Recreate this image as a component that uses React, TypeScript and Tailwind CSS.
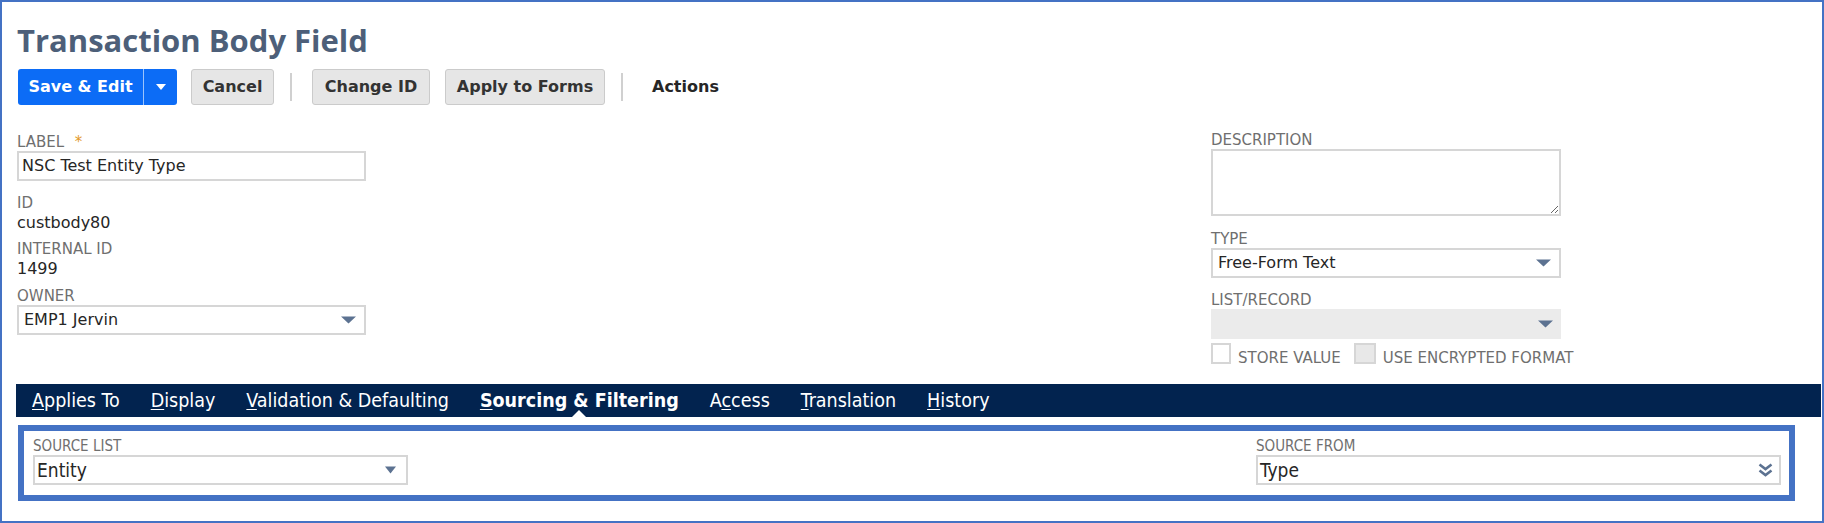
import { FC, ReactNode } from 'react';

const sans = "font-['DejaVu_Sans','Verdana',sans-serif]";
const cond = "font-['DejaVu_Sans_Condensed','DejaVu_Sans','Liberation_Sans_Narrow',sans-serif] font-stretch-condensed";

const Arrow: FC = () => (
  <svg width="15" height="8" viewBox="0 0 15 8" className="shrink-0">
    <path d="M0 0.5 L15 0.5 L7.5 7.5 Z" fill="#5c7291" />
  </svg>
);

const DoubleChevron: FC = () => (
  <svg width="15" height="14" viewBox="0 0 15 14" className="shrink-0">
    <path d="M1.5 1.5 L7.5 6 L13.5 1.5" fill="none" stroke="#5c7291" strokeWidth="2.6" />
    <path d="M1.5 7.5 L7.5 12 L13.5 7.5" fill="none" stroke="#5c7291" strokeWidth="2.6" />
  </svg>
);

const Label: FC<{ children: ReactNode; className?: string }> = ({ children, className }) => (
  <div className={`${sans} text-[15px] uppercase leading-[17px] text-[#6f6f6f] ${className ?? ''}`}>{children}</div>
);

const Value: FC<{ children: ReactNode }> = ({ children }) => (
  <div className={`${sans} mt-[1px] text-[16px] leading-[19px] text-[#262626]`}>{children}</div>
);

const Select: FC<{ value?: string; disabled?: boolean; width: string }> = ({ value, disabled, width }) => (
  <div
    className={`flex h-[30px] items-center justify-between pl-[5px] pr-[8px] ${width} ${
      disabled ? 'bg-[#ebebeb]' : 'border-2 border-[#d6d6d6] bg-white'
    }`}
  >
    <span className={`${sans} text-[16px] text-[#262626]`}>{value}</span>
    <Arrow />
  </div>
);

const tabs: { pre: string; key: string; post: string; active?: boolean }[] = [
  { pre: '', key: 'A', post: 'pplies To' },
  { pre: '', key: 'D', post: 'isplay' },
  { pre: '', key: 'V', post: 'alidation & Defaulting' },
  { pre: '', key: 'S', post: 'ourcing & Filtering', active: true },
  { pre: 'A', key: 'c', post: 'cess' },
  { pre: '', key: 'T', post: 'ranslation' },
  { pre: '', key: 'H', post: 'istory' },
];

const GrayButton: FC<{ label: string; width: string }> = ({ label, width }) => (
  <button
    className={`${sans} flex h-[36px] ${width} items-center justify-center rounded-[3px] border border-[#cbcbcb] bg-[#e6e6e6] text-[16px] font-bold text-[#333333]`}
  >
    {label}
  </button>
);

const Divider: FC = () => <div className="h-[28px] w-[2px] bg-[#d0d0d0]" />;

const App: FC = () => (
  <div className="h-[523px] w-[1824px] overflow-hidden border-2 border-[#4472c4] bg-white">
    <div className="pl-[15px] pt-[19px]">
      <h1 className="font-['Open_Sans',sans-serif] text-[31px] font-bold leading-[38px] text-[#4d5f79]">
        Transaction Body Field
      </h1>

      <div className="mt-[10px] flex h-[36px] items-center">
        <div className="ml-[1px] flex h-[36px] w-[159px] overflow-hidden rounded-[3px] bg-[#0c6cf6]">
          <span className={`${sans} flex w-[125px] items-center justify-center text-[16px] font-bold text-white`}>
            Save &amp; Edit
          </span>
          <span className="w-px bg-[#9cc3fb]" />
          <span className="flex flex-1 items-center justify-center">
            <svg width="10" height="6" viewBox="0 0 10 6">
              <path d="M0 0 L10 0 L5 6 Z" fill="#ffffff" />
            </svg>
          </span>
        </div>
        <div className="ml-[14px]">
          <GrayButton label="Cancel" width="w-[83px]" />
        </div>
        <div className="ml-[16px]">
          <Divider />
        </div>
        <div className="ml-[20px]">
          <GrayButton label="Change ID" width="w-[118px]" />
        </div>
        <div className="ml-[15px]">
          <GrayButton label="Apply to Forms" width="w-[160px]" />
        </div>
        <div className="ml-[16px]">
          <Divider />
        </div>
        <span className={`${sans} ml-[29px] text-[16px] font-bold text-[#262626]`}>Actions</span>
      </div>

      <div className="mt-[27px] flex items-start">
        <div className="w-[349px] pt-[2px]">
          <Label>
            Label <span className="ml-[6px] text-[#e39a2c]">*</span>
          </Label>
          <div className="flex h-[30px] items-center border-2 border-[#d6d6d6] pl-[3px]">
            <span className={`${sans} text-[16px] text-[#262626]`}>NSC Test Entity Type</span>
          </div>

          <Label className="mt-[14px]">ID</Label>
          <Value>custbody80</Value>

          <Label className="mt-[9px]">Internal ID</Label>
          <Value>1499</Value>

          <Label className="mt-[10px]">Owner</Label>
          <Select value="EMP1 Jervin" width="w-[349px]" />
        </div>

        <div className="ml-[845px] w-[350px]">
          <Label>Description</Label>
          <textarea
            readOnly
            className="block h-[67px] w-[350px] resize border-2 border-[#d6d6d6] bg-white outline-none"
          />

          <Label className="mt-[14px] leading-[18px]">Type</Label>
          <Select value="Free-Form Text" width="w-[350px]" />

          <Label className="mt-[13px] leading-[18px]">List/Record</Label>
          <Select disabled width="w-[350px]" />

          <div className="mt-[4px] flex h-[21px] items-end whitespace-nowrap">
            <div className="h-[21px] w-[20px] shrink-0 border-2 border-[#d6d6d6] bg-white" />
            <span className={`${sans} ml-[7px] text-[15px] leading-[11px] text-[#6f6f6f]`}>STORE VALUE</span>
            <div className="ml-[13px] h-[21px] w-[22px] shrink-0 border-2 border-[#d6d6d6] bg-[#e8e8e8]" />
            <span className={`${sans} ml-[7px] text-[15px] leading-[11px] text-[#6f6f6f]`}>
              USE ENCRYPTED FORMAT
            </span>
          </div>
        </div>
      </div>
    </div>

    <div className="ml-[14px] mr-[1px] mt-[20px] flex h-[33px] items-stretch gap-[31px] bg-[#02234f] pl-[16px]">
      {tabs.map((t) => (
        <div key={t.post} className="relative flex items-center">
          <span className={`${cond} text-[19.5px] text-white ${t.active ? 'font-bold' : ''}`}>
            {t.pre}
            <span className="underline underline-offset-2">{t.key}</span>
            {t.post}
          </span>
          {t.active && (
            <span className="absolute bottom-0 left-1/2 h-0 w-0 -translate-x-1/2 border-x-[7px] border-b-[7px] border-x-transparent border-b-white" />
          )}
        </div>
      ))}
    </div>

    <div className="ml-[16px] mr-[27px] mt-[8px] flex h-[76px] justify-between border-[6px] border-[#4472c4] pl-[9px] pr-[8px] pt-[7px]">
      <div>
        <div className={`${cond} text-[15px] uppercase leading-[17px] text-[#6f6f6f]`}>Source List</div>
        <div className="flex h-[30px] w-[375px] items-center justify-between border-2 border-[#d6d6d6] pl-[2px] pr-[10px]">
          <span className={`${cond} text-[19px] text-[#262626]`}>Entity</span>
          <svg width="11" height="8" viewBox="0 0 11 8">
            <path d="M0 0.5 L11 0.5 L5.5 7.5 Z" fill="#5c7291" />
          </svg>
        </div>
      </div>
      <div>
        <div className={`${cond} text-[15px] uppercase leading-[17px] text-[#6f6f6f]`}>Source From</div>
        <div className="flex h-[30px] w-[525px] items-center justify-between border-2 border-[#d6d6d6] pl-[2px] pr-[6px]">
          <span className={`${cond} text-[19px] text-[#262626]`}>Type</span>
          <DoubleChevron />
        </div>
      </div>
    </div>
  </div>
);

export default App;
